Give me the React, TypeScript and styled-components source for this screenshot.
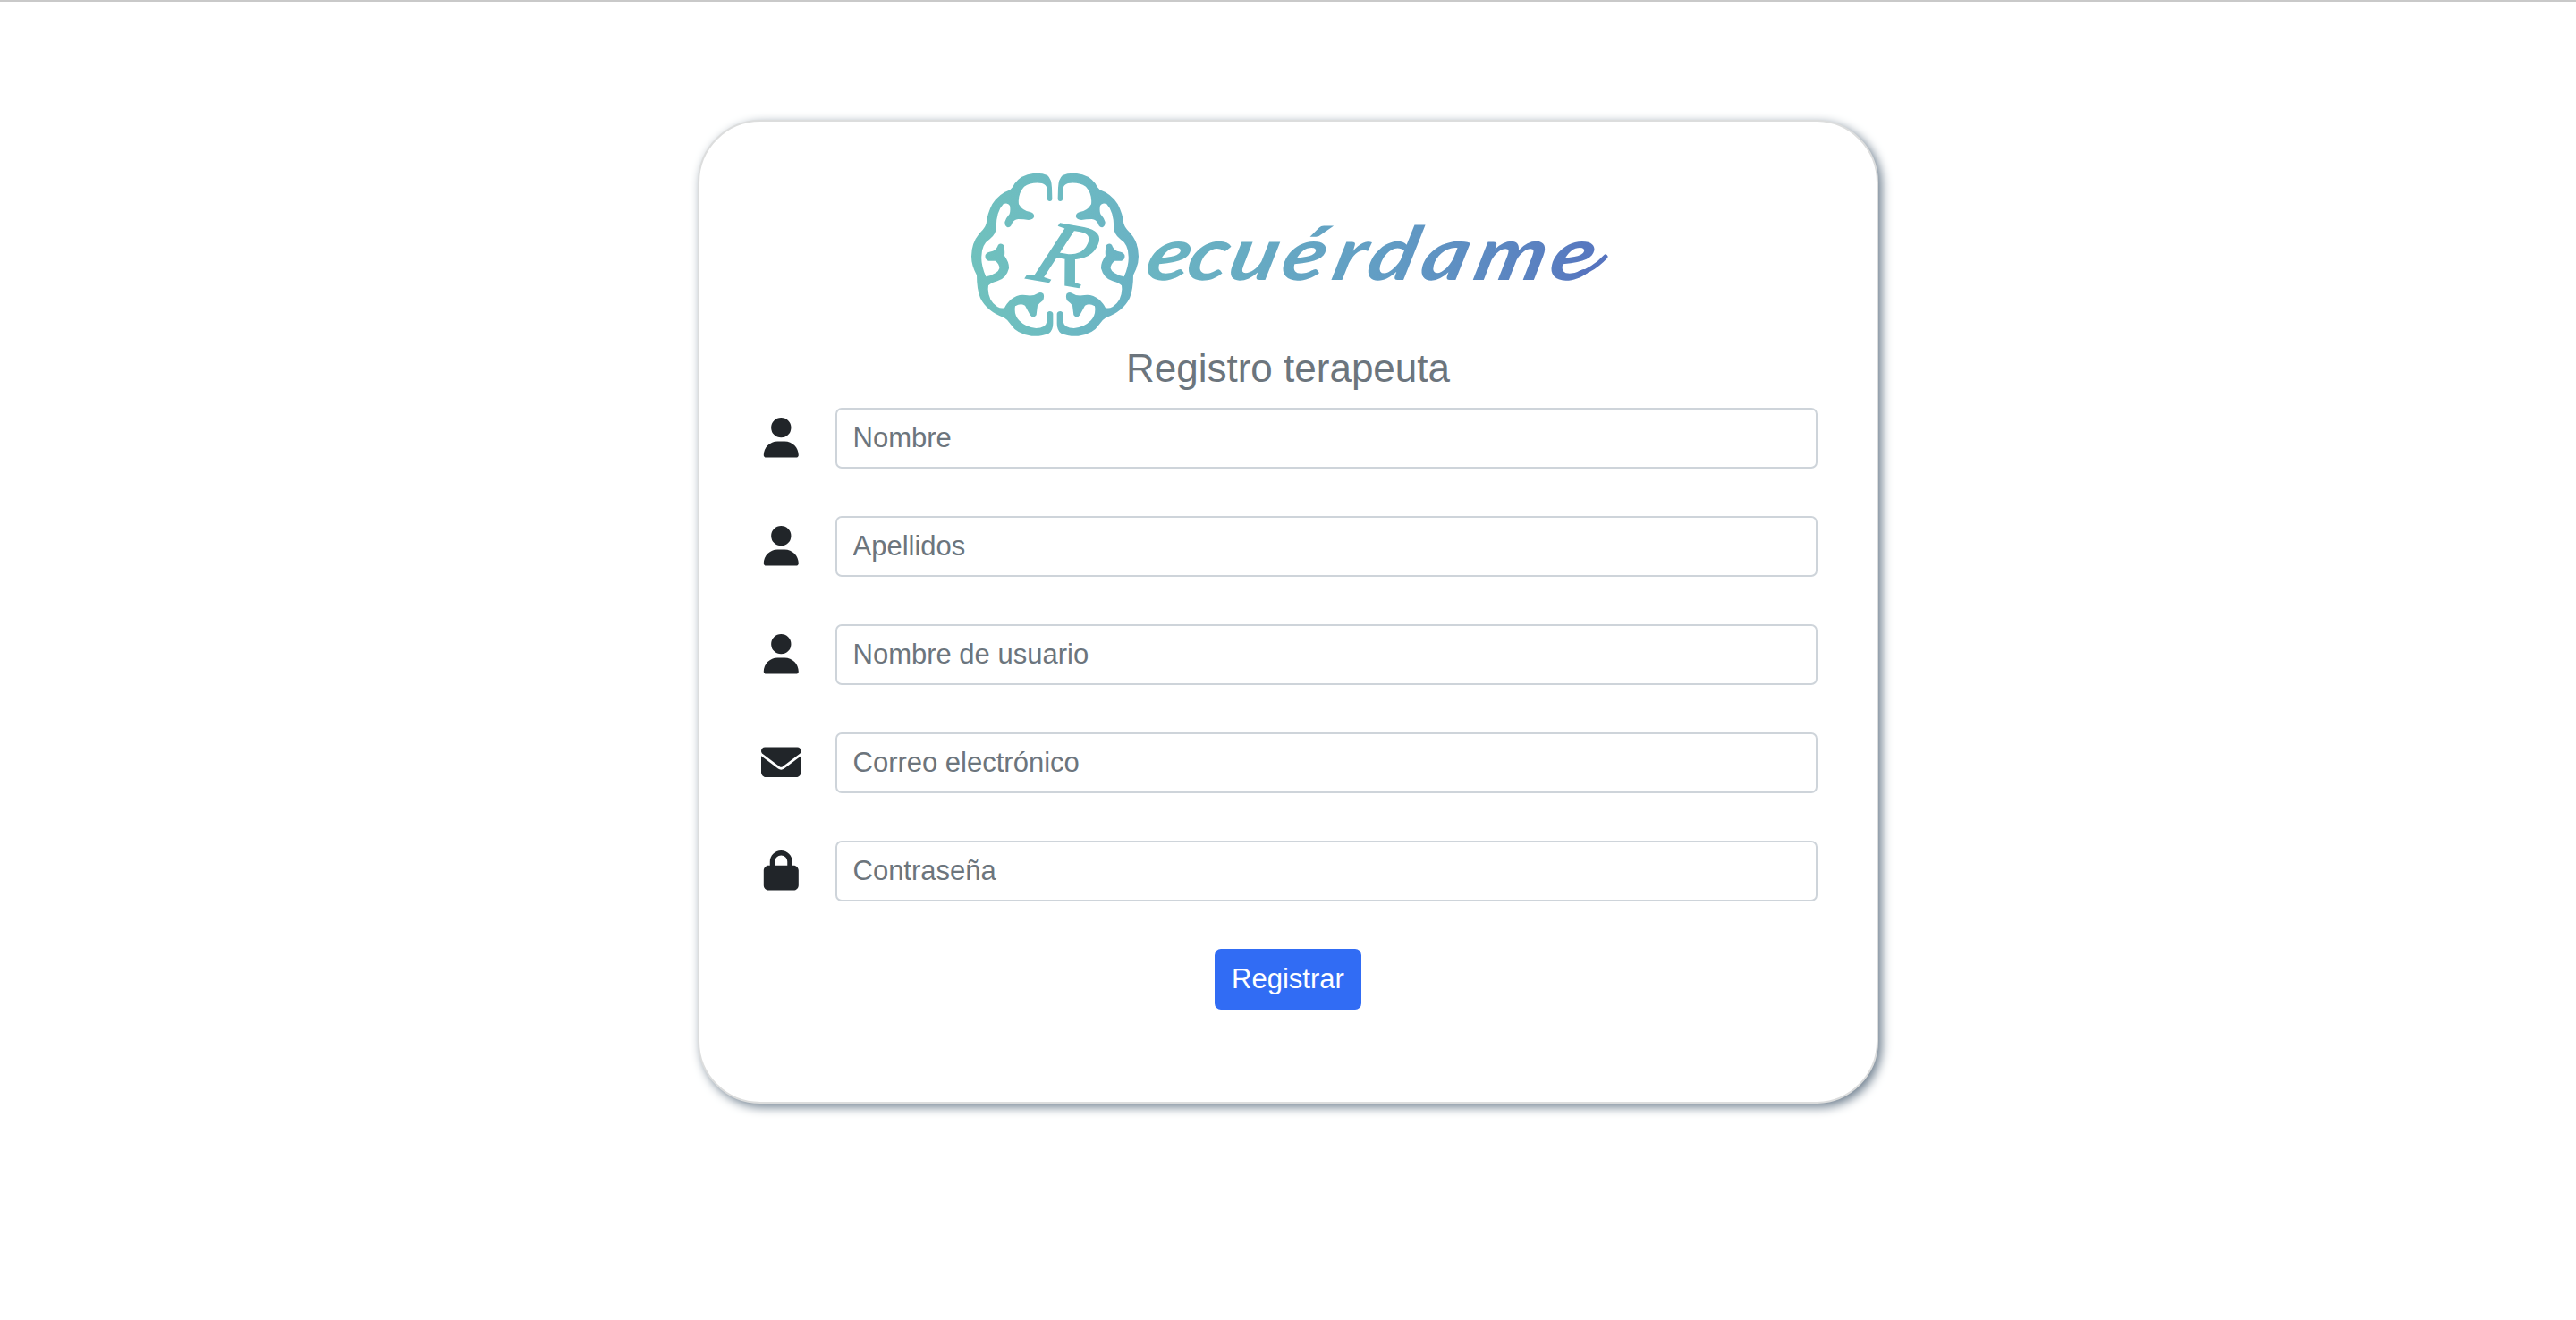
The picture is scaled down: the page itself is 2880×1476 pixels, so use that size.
import React from "react";
import styled, { createGlobalStyle } from "styled-components";
import { FaUser, FaEnvelope, FaLock } from "react-icons/fa6";

const GlobalStyle = createGlobalStyle`
  *, *::before, *::after { box-sizing: border-box; }
  body {
    margin: 0;
    background: #fff;
    color: #212529;
    font-family: "Liberation Sans", Arial, sans-serif;
  }
`;

const Page = styled.main`
  min-height: 1476px;
  padding-top: 132px;
  border-top: 2px solid #c9c9c9;
  display: flex;
  justify-content: center;
  align-items: flex-start;
`;

const Card = styled.form`
  width: 1320px;
  height: 1100px;
  padding: 48px 66px 0;
  border: 2px solid #dcdddd;
  border-radius: 70px;
  background: #fff;
  box-shadow: 4px 4px 12px slategray;
  display: flex;
  flex-direction: column;
  align-items: center;
`;

const Logo = styled.svg`
  display: block;
  width: 740px;
  height: 206px;
  flex: none;
`;

const Title = styled.h1`
  margin: -4px 0 18px;
  font-size: 44px;
  line-height: 52px;
  font-weight: 400;
  color: #6c757d;
`;

const Fields = styled.div`
  width: 100%;
  display: flex;
  flex-direction: column;
  gap: 53px;
`;

const Field = styled.label`
  display: flex;
  align-items: center;
  gap: 35px;
  height: 68px;
`;

const IconSlot = styled.span`
  display: flex;
  flex: none;
  width: 51px;
  padding-bottom: 1px;
  justify-content: center;
  color: #212529;
`;

const Input = styled.input`
  flex: 1;
  min-width: 0;
  height: 68px;
  padding: 0 17.5px;
  border: 2px solid #ced4da;
  border-radius: 7px;
  background: #fff;
  font: 400 31px "Liberation Sans", Arial, sans-serif;
  color: #212529;
  outline: none;
  &::placeholder {
    color: #6c757d;
    opacity: 1;
  }
`;

const Submit = styled.button`
  margin-top: 53px;
  width: 164px;
  height: 68px;
  padding: 0;
  border: 0;
  border-radius: 7px;
  background: #316cf4;
  color: #fff;
  font: 400 31px "Liberation Sans", Arial, sans-serif;
`;

const LobeHalf =
  "M303 130Q304 135 311 135Q319 135 319 126L318 90Q317 60 303 48Q285 40 255 42Q215 46 193 76Q187 90 178 97Q140 110 118 145Q102 175 98 210Q94 225 75 243Q48 275 48 320Q48 350 66 383Q66 430 78 460Q100 505 158 526Q170 533 180 548Q200 580 250 587Q285 589 308 578Q322 568 322 545L322 512Q320 504 311 504Q303 504 302 512L301 540Q297 560 265 561Q230 558 208 535Q190 515 195 487Q215 475 228 485Q236 500 245 517Q256 530 266 517Q268 500 270 485Q278 475 288 468Q294 455 289 445Q280 438 272 443Q255 455 230 450Q205 445 180 465Q165 480 160 491Q150 497 135 489Q105 470 104 430L105 418Q115 408 135 403Q165 395 174 360Q175 340 159 318Q161 300 157 283Q148 273 138 281Q132 298 120 302Q100 305 95 315Q92 330 105 335L128 335Q142 345 142 360Q138 378 97 388Q80 350 82 320Q82 280 110 262Q131 245 131 225Q131 170 155 145Q170 138 177 150Q180 165 176 178Q165 190 160 205Q160 220 170 223Q180 223 184 210Q190 197 205 195Q225 195 240 198Q256 196 259 185Q258 175 245 171Q220 168 207 145Q203 110 225 86Q250 70 285 75Q300 80 301 92Z";

const fields = [
  { label: "Nombre", type: "text", Icon: FaUser },
  { label: "Apellidos", type: "text", Icon: FaUser },
  { label: "Nombre de usuario", type: "text", Icon: FaUser },
  { label: "Correo electrónico", type: "email", Icon: FaEnvelope },
  { label: "Contraseña", type: "password", Icon: FaLock },
];

function BrandLogo() {
  return (
    <Logo viewBox="0 0 740 206" role="img" aria-label="Recuérdame">
      <defs>
        <linearGradient id="word" gradientUnits="userSpaceOnUse" x1="170" y1="0" x2="600" y2="-40">
          <stop offset="0" stopColor="#6bb6c2" />
          <stop offset="0.5" stopColor="#629ec4" />
          <stop offset="1" stopColor="#5674bf" />
        </linearGradient>
        <linearGradient id="lobeLeft" gradientUnits="userSpaceOnUse" x1="48" y1="330" x2="329" y2="300">
          <stop offset="0" stopColor="#70c1bd" />
          <stop offset="1" stopColor="#6dbbc2" />
        </linearGradient>
        <linearGradient id="lobeRight" gradientUnits="userSpaceOnUse" x1="48" y1="330" x2="329" y2="300">
          <stop offset="0" stopColor="#6ab2c4" />
          <stop offset="1" stopColor="#6dbbc2" />
        </linearGradient>
      </defs>
      <g transform="translate(0 -4) scale(0.33333)">
        <path d={LobeHalf} fill="url(#lobeLeft)" />
        <path d={LobeHalf} fill="url(#lobeRight)" transform="translate(657 0) scale(-1 1)" />
      </g>
      <text
        transform="translate(77 127) rotate(10) skewX(-14)"
        fill="#6dbac1"
        stroke="#6dbac1"
        strokeWidth="1.5"
        fontFamily="Liberation Serif, serif"
        fontStyle="italic"
        fontSize="102"
      >
        R
      </text>
      <text
        transform="translate(0 129) skewX(-14) scale(1.2 1)"
        x="173 211 250 299 347 379 429 479 549"
        y="0"
        fill="url(#word)"
        fontFamily="Lato, sans-serif"
        fontWeight="700"
        fontStyle="italic"
        fontSize="83"
      >
        ecuérdame
      </text>
      <path
        d="M696 122Q712 117 725 103"
        fill="none"
        stroke="#5674bf"
        strokeWidth="5"
        strokeLinecap="round"
      />
    </Logo>
  );
}

export default function App() {
  return (
    <>
      <GlobalStyle />
      <Page>
        <Card>
          <BrandLogo />
          <Title>Registro terapeuta</Title>
          <Fields>
            {fields.map(({ label, type, Icon }) => (
              <Field key={label}>
                <IconSlot>
                  <Icon size={44.6} />
                </IconSlot>
                <Input type={type} placeholder={label} aria-label={label} />
              </Field>
            ))}
          </Fields>
          <Submit type="button">Registrar</Submit>
        </Card>
      </Page>
    </>
  );
}
